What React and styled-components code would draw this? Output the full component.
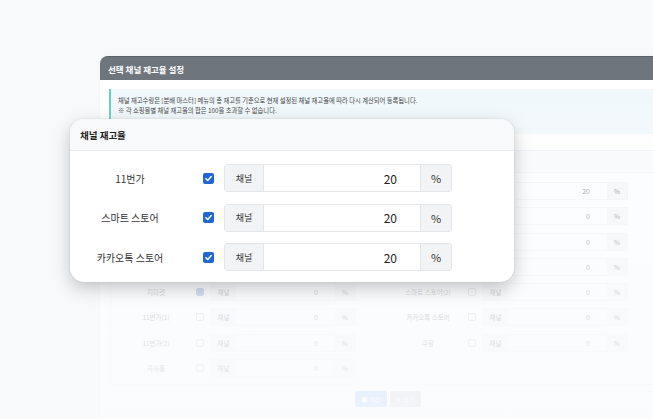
import React from 'react';
import styled, { createGlobalStyle } from 'styled-components';

const GlobalStyle = createGlobalStyle`
  * { box-sizing: border-box; }
  body {
    margin: 0;
    background: #f8f9fb;
    overflow: hidden;
    font-family: "Noto Sans CJK KR", "Noto Sans", sans-serif;
  }
`

const Stage = styled.div`
  position: relative;
  width: 653px;
  height: 419px;
  overflow: hidden;
  padding: 56px 0 0 100px;
`

const Panel = styled.div`
  position: relative;
  width: 576px;
  height: 363px;
  background: #fff;
  border-radius: 8px 8px 0 0;
  box-shadow: 0 0 2px rgba(0, 0, 0, 0.04);
`

const PanelHeader = styled.div`
  height: 24px;
  display: flex;
  align-items: center;
  padding-left: 8px;
  background: #6e757d;
  border-top: 1px solid #5c636a;
  border-radius: 8px 8px 0 0;
  color: #fff;
  font-size: 8.5px;
  font-weight: 700;
`

const PanelBody = styled.div`
  padding: 9px 10px 0 9px;
`

const Notice = styled.div`
  height: 45px;
  padding: 7px 7px;
  background: #f1f8fb;
  border-left: 2px solid #66d1c2;
  color: #444;
  font-size: 6.3px;
  line-height: 10px;
  white-space: nowrap;
`

const Section = styled.div`
  margin: 16px 0 0 1px;
  border: 1px solid #eceef1;
`

const SectionHead = styled.div`
  height: 22px;
  display: flex;
  align-items: center;
  padding-left: 8px;
  background: #f8f9fa;
  border-bottom: 1px solid #eceef1;
  font-size: 7px;
  font-weight: 700;
  color: #222;
`

const SectionGrid = styled.div`
  display: grid;
  grid-template-columns: 241px 241px;
  grid-auto-flow: column;
  grid-template-rows: repeat(8, 18px);
  column-gap: 31px;
  row-gap: 7.3px;
  padding: 9px 5px 7px;
`

const MiniRow = styled.div`
  display: flex;
  align-items: center;
`

const MiniLabel = styled.div`
  width: 80px;
  text-align: center;
  font-size: 6.5px;
  color: #444;
`

const MiniCheck = styled.span`
  width: 8px;
  height: 8px;
  border-radius: 2px;
  border: 1px solid ${p => (p.$on ? '#3d77d6' : '#bbb')};
  background: ${p => (p.$on ? '#3d77d6' : '#fff')};
`

const MiniGroup = styled.div`
  margin-left: 6px;
  width: 146px;
  height: 18px;
  display: flex;
  border: 1px solid #eceef1;
  font-size: 6.5px;
  color: #333;
`

const MiniAddon = styled.div`
  width: ${p => p.$w}px;
  display: flex;
  align-items: center;
  justify-content: center;
  background: #f1f2f4;
`

const MiniValue = styled.div`
  flex: 1;
  display: flex;
  align-items: center;
  justify-content: flex-end;
  padding-right: 17px;
  font-size: 7px;
`

const Buttons = styled.div`
  display: flex;
  justify-content: center;
  gap: 3px;
  margin-top: 6px;
`

const Button = styled.div`
  height: 16px;
  width: ${p => p.$w}px;
  display: flex;
  align-items: center;
  justify-content: center;
  gap: 2px;
  border-radius: 2px;
  background: ${p => p.$bg};
  color: #fff;
  font-size: 6px;
`

const Fade = styled.div`
  position: absolute;
  inset: 0;
  pointer-events: none;
  background: linear-gradient(
    to bottom,
    rgba(250, 251, 253, 0) 0px,
    rgba(250, 251, 253, 0) 50px,
    rgba(250, 251, 253, 0.5) 110px,
    rgba(250, 251, 253, 0.78) 230px,
    rgba(250, 251, 253, 0.93) 363px
  );
`

const Card = styled.div`
  position: absolute;
  left: 70px;
  top: 119px;
  width: 444px;
  background: #fff;
  border-radius: 14px;
  overflow: hidden;
  box-shadow: 0 6px 18px rgba(0, 0, 0, 0.22), 0 0 2px rgba(0, 0, 0, 0.12);
`

const CardHeader = styled.div`
  height: 32px;
  display: flex;
  align-items: center;
  padding-left: 10px;
  background: #f8f9fa;
  border-bottom: 1px solid #e6e8eb;
  font-size: 9.5px;
  font-weight: 700;
  color: #222;
`

const CardBody = styled.div`
  display: flex;
  flex-direction: column;
  gap: 11.5px;
  padding: 13px 0 11px;
`

const Row = styled.div`
  display: flex;
  align-items: center;
  height: 28px;
`

const Label = styled.div`
  width: 120px;
  text-align: center;
  font-size: 10px;
  color: #333;
`

const Check = styled.span`
  margin-left: 13px;
  width: 11px;
  height: 11px;
  border-radius: 2px;
  background: #2167d3;
  display: flex;
  align-items: center;
  justify-content: center;
`

const Group = styled.div`
  margin-left: 10px;
  width: 228px;
  height: 28px;
  display: flex;
  border: 1px solid #e3e5e8;
  border-radius: 3px;
  overflow: hidden;
`

const Addon = styled.div`
  width: ${p => p.$w}px;
  display: flex;
  align-items: center;
  justify-content: center;
  background: #f2f3f5;
  font-size: ${p => p.$size}px;
  color: #333;
  border-${p => p.$side}: 1px solid #e3e5e8;
`

const Value = styled.div`
  flex: 1;
  display: flex;
  align-items: center;
  justify-content: flex-end;
  padding-right: 23px;
  font-size: 12px;
  color: #222;
`

// rows 1-4 of each column sit under the card, only the right column's values show
const leftRows = [
  { name: '', on: true, value: '' },
  { name: '', on: true, value: '' },
  { name: '', on: true, value: '' },
  { name: '', on: false, value: '' },
  { name: '지마켓', on: true, value: 0 },
  { name: '11번가(1)', on: false, value: 0 },
  { name: '11번가(2)', on: false, value: 0 },
  { name: '자사몰', on: false, value: 0 },
]

const rightRows = [
  { name: '', on: true, value: 20, hidden: true },
  { name: '', on: false, value: 0, hidden: true },
  { name: '', on: false, value: 0, hidden: true },
  { name: '', on: false, value: 0, hidden: true },
  { name: '스마트 스토어(2)', on: false, value: 0 },
  { name: '카카오톡 스토어', on: false, value: 0 },
  { name: '쿠팡', on: false, value: 0 },
]

const cardRows = ['11번가', '스마트 스토어', '카카오톡 스토어']

const Tick = () => (
  <svg width="9" height="9" viewBox="0 0 12 12">
    <path d="M2.5 6.3 L5 8.7 L9.6 3.4" fill="none" stroke="#fff" strokeWidth="2" strokeLinecap="round" strokeLinejoin="round" />
  </svg>
)

const MiniItem = ({ row }) => (
  <MiniRow>
    <MiniLabel>{row.name}</MiniLabel>
    <MiniCheck $on={row.on} />
    <MiniGroup>
      <MiniAddon $w={25}>{row.name || row.hidden ? (row.hidden ? '' : '채널') : ''}</MiniAddon>
      <MiniValue>{row.value}</MiniValue>
      <MiniAddon $w={20}>{row.name || row.hidden ? '%' : ''}</MiniAddon>
    </MiniGroup>
  </MiniRow>
)

const App = () => {
  return (
    <>
      <GlobalStyle />
      <Stage>
        <Panel>
          <PanelHeader>선택 채널 재고율 설정</PanelHeader>
          <PanelBody>
            <Notice>
              채널 재고수량은 [분배 마스터] 메뉴의 총 재고를 기준으로 현재 설정된 채널 재고율에 따라 다시 계산되어 등록됩니다.
              <br />
              ※ 각 쇼핑몰별 채널 재고율의 합은 100을 초과할 수 없습니다.
            </Notice>
            <Section>
              <SectionHead />
              <SectionGrid>
                {leftRows.map((r, i) => <MiniItem key={'l' + i} row={r} />)}
                {rightRows.map((r, i) => <MiniItem key={'r' + i} row={r} />)}
              </SectionGrid>
            </Section>
            <Buttons>
              <Button $w={32} $bg="#4a8ef0">● 저장</Button>
              <Button $w={31} $bg="#a4a9ae">✕ 닫기</Button>
            </Buttons>
          </PanelBody>
          <Fade />
        </Panel>

        <Card>
          <CardHeader>채널 재고율</CardHeader>
          <CardBody>
            {cardRows.map(name => (
              <Row key={name}>
                <Label>{name}</Label>
                <Check><Tick /></Check>
                <Group>
                  <Addon $w={39} $size={9} $side="right">채널</Addon>
                  <Value>20</Value>
                  <Addon $w={31} $size={11} $side="left">%</Addon>
                </Group>
              </Row>
            ))}
          </CardBody>
        </Card>
      </Stage>
    </>
  )
}

export default App
